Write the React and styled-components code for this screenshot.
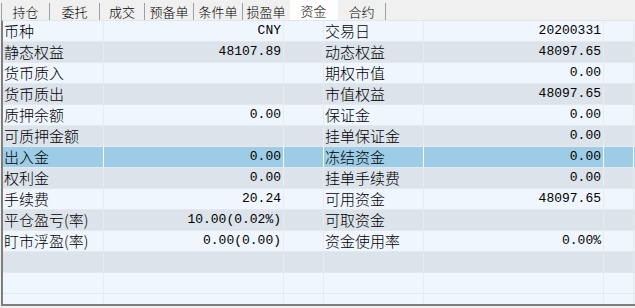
import styled, { createGlobalStyle } from "styled-components";

const GlobalStyle = createGlobalStyle`
  html, body {
    margin: 0;
    padding: 0;
    background: #f0f0f0;
    overflow: hidden;
  }
  * { box-sizing: border-box; }
`;

const tabs = [
  { name: "持仓", w: 49 },
  { name: "委托", w: 50 },
  { name: "成交", w: 45 },
  { name: "预备单", w: 49 },
  { name: "条件单", w: 49 },
  { name: "损盈单", w: 47, noSep: true },
  { name: "资金", w: 48, active: true },
  { name: "合约", w: 48 },
];

const rows = [
  ["币种", "CNY", "交易日", "20200331"],
  ["静态权益", "48107.89", "动态权益", "48097.65"],
  ["货币质入", "", "期权市值", "0.00"],
  ["货币质出", "", "市值权益", "48097.65"],
  ["质押余额", "0.00", "保证金", "0.00"],
  ["可质押金额", "", "挂单保证金", "0.00"],
  ["出入金", "0.00", "冻结资金", "0.00"],
  ["权利金", "0.00", "挂单手续费", "0.00"],
  ["手续费", "20.24", "可用资金", "48097.65"],
  ["平仓盈亏(率)", "10.00(0.02%)", "可取资金", ""],
  ["盯市浮盈(率)", "0.00(0.00)", "资金使用率", "0.00%"],
  ["", "", "", ""],
  ["", "", "", ""],
  ["", "", "", ""],
];

const SELECTED = 6;
const tone = (i) => {
  if (i === SELECTED) return "sel";
  if (i >= 12) return "light";
  return i % 2 === 0 ? "light" : "dark";
};

const bg = { light: "#eff6fd", dark: "#dce3ea", sel: "#9dcde6" };

const App = () => {
  return (
    <>
      <GlobalStyle />
      <Page>
        <TabBar>
          {tabs.map((t) => (
            <Tab key={t.name} $w={t.w} $active={t.active} $noSep={t.noSep}>
              {t.name}
            </Tab>
          ))}
        </TabBar>
        <Panel>
          {rows.map((r, i) => (
            <Row key={i} $tone={tone(i)}>
              <Label>{r[0]}</Label>
              <Value>{r[1]}</Value>
              <Gap />
              <Label>{r[2]}</Label>
              <Value>{r[3]}</Value>
              <Gap />
            </Row>
          ))}
        </Panel>
      </Page>
    </>
  );
};

export default App;

const Page = styled.div`
  width: 635px;
  height: 308px;
  background: #f0f0f0;
  display: flex;
  flex-direction: column;
`;

const TabBar = styled.div`
  height: 20px;
  display: flex;
  align-items: flex-end;
  padding-left: 1px;
  background: #f0f0f0;
  font-family: "Noto Sans CJK SC", sans-serif;
  font-size: 13px;
  font-weight: 300;
  color: #000;

  & > div:first-child {
    border-left: 1px solid #a0a0a0;
  }
`;

const Tab = styled.div`
  width: ${(p) => p.$w}px;
  height: ${(p) => (p.$active ? 20 : 17)}px;
  padding-top: ${(p) => (p.$active ? 2 : 0)}px;
  line-height: 17px;
  text-align: center;
  background: ${(p) => (p.$active ? "#ffffff" : "transparent")};
  border-right: 1px solid
    ${(p) => (p.$active || p.$noSep ? "transparent" : "#a0a0a0")};
`;

const Panel = styled.div`
  margin-left: 1px;
  width: 634px;
  height: 286px;
  overflow: hidden;
  border-top: 1px solid #e2e5e9;
  border-left: 2px solid #7e7e7e;
  border-bottom: 2px solid #7e7e7e;
  background: #eff6fd;
`;

const Row = styled.div`
  display: grid;
  grid-template-columns: 101px 180px 40px 100px 180px 30px;
  height: 21px;
  background: ${(p) => bg[p.$tone]};
  border-bottom: 1px solid #e6e9ec;

  & > div {
    border-right: 1px solid ${(p) => (p.$tone === "sel" ? "#ffffff" : "#e8ebee")};
  }
`;

const Label = styled.div`
  height: 20px;
  padding-left: 1px;
  font-family: "Noto Sans CJK SC", sans-serif;
  font-size: 15px;
  font-weight: 300;
  line-height: 19px;
  color: #000;
  white-space: nowrap;
  overflow: hidden;
`;

const Value = styled.div`
  height: 20px;
  padding-right: 2px;
  text-align: right;
  font-family: "Liberation Mono", monospace;
  font-size: 13px;
  line-height: 20px;
  color: #000;
  white-space: nowrap;
`;

const Gap = styled.div`
  height: 20px;
`;
